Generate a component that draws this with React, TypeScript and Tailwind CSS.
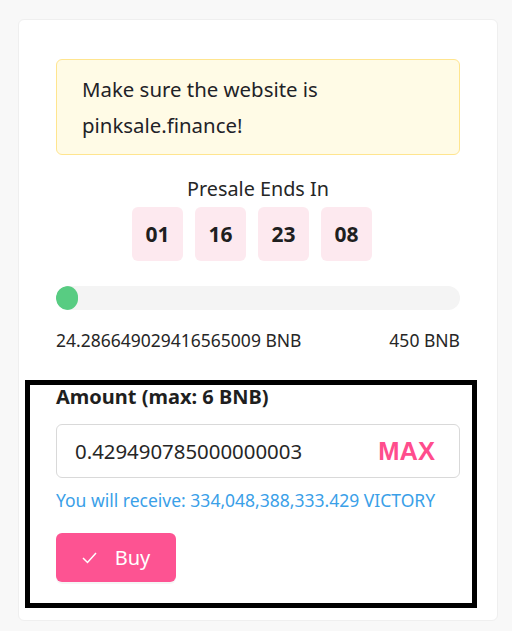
const FONT = "font-['Noto_Sans',_'Open_Sans',_sans-serif]";

function Countdown({ parts }: { parts: string[] }) {
  return (
    <div className="flex justify-center gap-3 mt-1 pr-3">
      {parts.map((p, i) => (
        <div
          key={i}
          className="w-[51px] h-[54px] rounded-md bg-[#fde9ef] flex items-center justify-center pt-[2px] text-[21px] font-bold text-[#1f1f1f]"
        >
          {p}
        </div>
      ))}
    </div>
  );
}

export default function App() {
  return (
    <div className={`min-h-[631px] bg-[#f8f8f8] pt-[19px] pl-[18px] pr-[14px] pb-[10px] ${FONT}`}>
      <div className="bg-white border border-[#efefef] rounded-md px-[6px] pt-[39px] pb-[12px]">
        <div className="px-[31px]">
          <div className="bg-[#fffbe6] border border-[#ffe58f] rounded-md pl-[25px] pr-4 py-[11px] text-[20.4px] leading-[36px] text-[#1f2328]">
            Make sure the website is
            <br />
            pinksale.finance!
          </div>

          <div className="mt-5 text-center text-[19.8px] leading-[28px] text-[#262626]">
            Presale Ends In
          </div>
          <Countdown parts={["01", "16", "23", "08"]} />

          <div className="mt-[25px] h-6 rounded-full bg-[#f4f4f4] overflow-hidden">
            <div className="h-full w-[22px] rounded-full bg-[#58cc82]" />
          </div>

          <div className="mt-[19px] flex justify-between text-[17.5px] leading-[22px] text-[#262626]">
            <span>24.286649029416565009 BNB</span>
            <span>450 BNB</span>
          </div>
        </div>

        <div className="mt-[29px] mr-[14px] border-[5px] border-black pl-[26px] pr-[12px] pb-[21px]">
          <div className="text-[20px] leading-[24px] font-bold text-[#1f1f1f]">
            Amount (max: 6 BNB)
          </div>
          <div className="mt-[15px] h-[54px] border border-[#d9d9d9] rounded-md flex items-center pl-[18px] pr-6">
            <span className="flex-1 text-[20.4px] text-[#262626]">
              0.429490785000000003
            </span>
            <span className="font-['Liberation_Sans',_sans-serif] font-bold text-[25.5px] text-[#ff4d8d]">
              MAX
            </span>
          </div>
          <div className="mt-[10px] text-[17.5px] leading-[24px] text-[#3aa0e8]">
            You will receive: 334,048,388,333.429 VICTORY
          </div>
          <button className="mt-[21px] w-[120px] h-[49px] rounded-md bg-[#fd5392] text-white text-[20px] flex items-center justify-center gap-[18px] shadow-[0_2px_0_rgba(0,0,0,0.04)]">
            <svg width="15" height="12" viewBox="0 0 15 12" fill="none" stroke="white" strokeWidth="1.5">
              <path d="M1 6 L5.5 10.5 L14 1" />
            </svg>
            <span>Buy</span>
          </button>
        </div>
      </div>
    </div>
  );
}
